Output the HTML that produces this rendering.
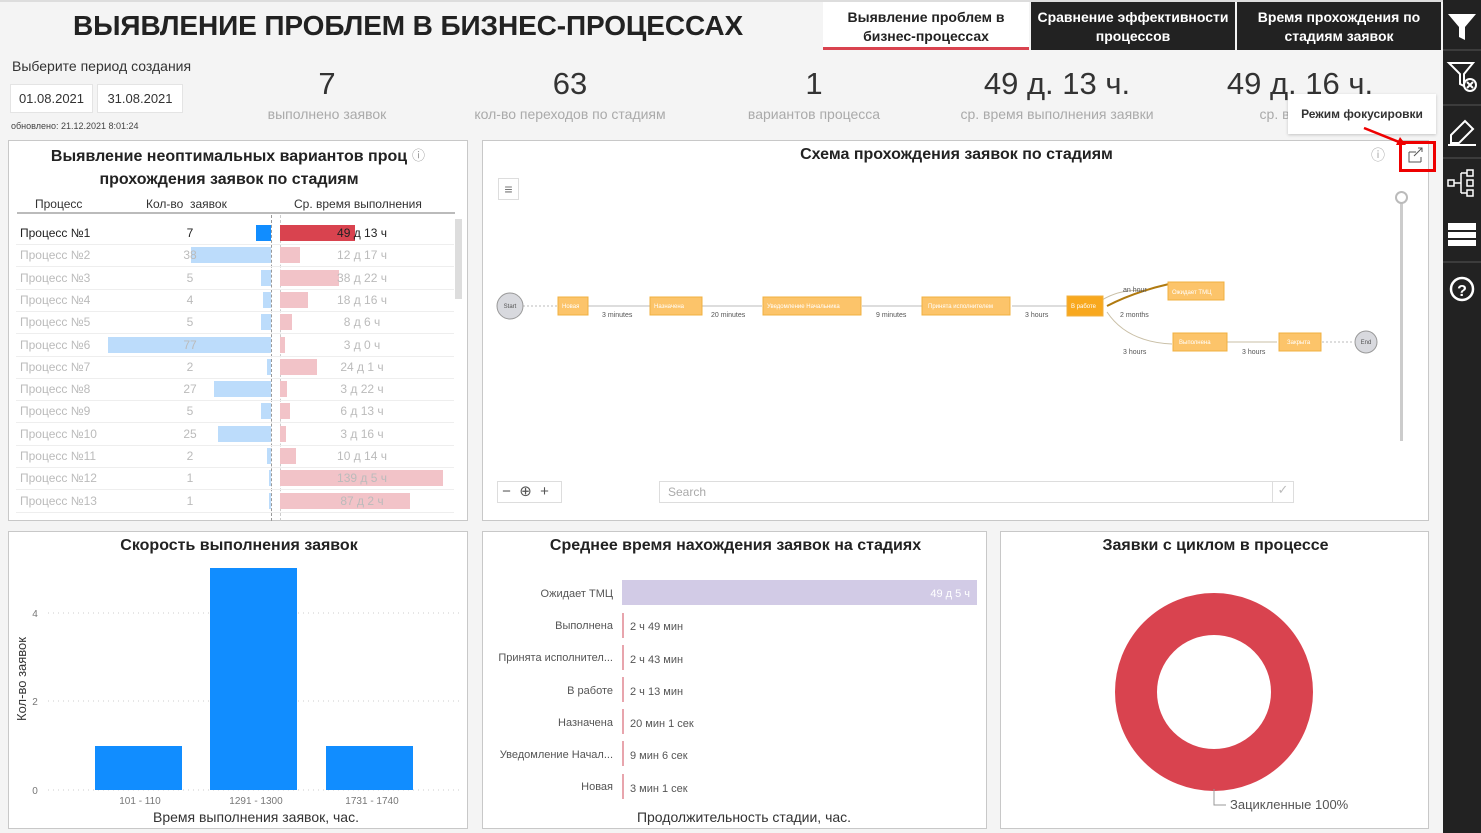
<!DOCTYPE html>
<html><head><meta charset="utf-8">
<style>
*{box-sizing:border-box;margin:0;padding:0}
body{width:1481px;height:833px;background:#f4f4f4;font-family:"Liberation Sans","DejaVu Sans",sans-serif;position:relative;overflow:hidden;color:#222}
.a{position:absolute}
.panel{position:absolute;background:#fff;border:1px solid #c8c8c8}
.kn{position:absolute;text-align:center;font-size:31px;color:#333;font-family:"Liberation Sans Narrow","Liberation Sans",sans-serif}
.kl{position:absolute;text-align:center;font-size:14px;color:#aaa}
.tab{position:absolute;top:2px;height:48px;background:#222;color:#fff;font-weight:bold;font-size:14px;text-align:center;line-height:19px;padding-top:6px}
.ttl{position:absolute;font-weight:bold;font-size:16px;color:#222;text-align:center}
</style></head><body>
<div class="a" style="left:0;top:0;width:1443px;height:2px;background:#ddd"></div>
<div class="a" style="left:73px;top:10px;font-size:28px;font-weight:bold;color:#222;letter-spacing:-0.1px">ВЫЯВЛЕНИЕ ПРОБЛЕМ В БИЗНЕС-ПРОЦЕССАХ</div>
<div class="tab" style="left:823px;width:206px;background:#fff;color:#222;border-bottom:3px solid #d9434f">Выявление проблем в<br>бизнес-процессах</div>
<div class="tab" style="left:1031px;width:204px">Сравнение эффективности<br>процессов</div>
<div class="tab" style="left:1237px;width:204px">Время прохождения по<br>стадиям заявок</div>
<div class="a" style="left:1443px;top:0;width:38px;height:833px;background:#222"></div>
<svg class="a" style="left:1443px;top:0" width="38" height="320">
<g fill="#fff" stroke="#fff">
<path d="M5 14h28l-11 13v13l-6-3v-10z" stroke="none"/>
<path d="M6 63h24l-9 11v12l-4-2v-10z" fill="none" stroke-width="2"/>
<circle cx="27" cy="85" r="6" fill="#222" stroke-width="2"/><path d="M24 82l6 6M30 82l-6 6" stroke-width="2"/>
<path d="M8 135l14-14 8 8-14 14h-8z" fill="none" stroke-width="2"/><path d="M5 145h28" stroke-width="2"/>
<rect x="5" y="180" width="6" height="6" fill="none" stroke-width="1.5"/><rect x="24" y="170" width="6" height="6" fill="none" stroke-width="1.5"/><rect x="24" y="180" width="6" height="6" fill="none" stroke-width="1.5"/><rect x="24" y="190" width="6" height="6" fill="none" stroke-width="1.5"/>
<path d="M11 183h7M18 173v20M18 173h6M18 193h6" fill="none" stroke-width="1.5"/>
<rect x="5" y="223" width="28" height="7" stroke="none"/><rect x="5" y="232" width="28" height="6" stroke="none"/><rect x="5" y="240" width="28" height="6" stroke="none"/>
<circle cx="19" cy="289" r="11" fill="none" stroke-width="2.5"/>
</g>
<path d="M0 50h38M0 105h38M0 158h38M0 262h38" stroke="#555"/>
<text x="19" y="296" fill="#fff" font-size="16" font-weight="bold" text-anchor="middle" font-family="Liberation Sans">?</text>
</svg>

<div class="a" style="left:12px;top:58px;font-size:14px;color:#333">Выберите период создания</div>
<div class="a" style="left:10px;top:84px;width:83px;height:29px;background:#fff;border:1px solid #e4e4e4;font-size:13px;text-align:center;line-height:28px;color:#333">01.08.2021</div>
<div class="a" style="left:97px;top:84px;width:86px;height:29px;background:#fff;border:1px solid #e4e4e4;font-size:13px;text-align:center;line-height:28px;color:#333">31.08.2021</div>
<div class="a" style="left:11px;top:121px;font-size:9px;color:#444">обновлено: 21.12.2021 8:01:24</div>

<div class="kn" style="left:227px;top:66px;width:200px">7</div><div class="kl" style="left:227px;top:106px;width:200px">выполнено заявок</div>
<div class="kn" style="left:470px;top:66px;width:200px">63</div><div class="kl" style="left:440px;top:106px;width:260px">кол-во переходов по стадиям</div>
<div class="kn" style="left:714px;top:66px;width:200px">1</div><div class="kl" style="left:714px;top:106px;width:200px">вариантов процесса</div>
<div class="kn" style="left:957px;top:66px;width:200px">49 д. 13 ч.</div><div class="kl" style="left:937px;top:106px;width:240px">ср. время выполнения заявки</div>
<div class="kn" style="left:1200px;top:66px;width:200px">49 д. 16 ч.</div><div class="kl" style="left:1180px;top:106px;width:240px">ср. время за</div>

<div class="panel" style="left:8px;top:140px;width:460px;height:381px">
<div class="ttl" style="left:0;top:4px;width:440px;line-height:23px">Выявление неоптимальных вариантов проц<br>прохождения заявок по стадиям</div>
<div class="a" style="left:403px;top:4px;font-size:13px;color:#999">ⓘ</div>
<div class="a" style="left:26px;top:56px;font-size:12px;color:#333">Процесс</div>
<div class="a" style="left:137px;top:56px;font-size:12px;color:#333">Кол-во &nbsp;заявок</div>
<div class="a" style="left:285px;top:56px;font-size:12px;color:#333">Ср. время выполнения</div>
<div class="a" style="left:8px;top:71px;width:438px;height:2px;background:#bbb"></div>
<div class="a" style="left:446px;top:78px;width:7px;height:80px;background:#ddd"></div>
<div class="a" style="left:262px;top:74px;width:1px;height:306px;border-left:1px dashed #999"></div>
<div class="a" style="left:271px;top:74px;width:1px;height:306px;border-left:1px dashed #ccc"></div>
</div>
<div id="tbl"></div>

<div class="panel" style="left:482px;top:140px;width:947px;height:381px">
<div class="ttl" style="left:0;top:5px;width:947px">Схема прохождения заявок по стадиям</div>
<div class="a" style="left:888px;top:4px;font-size:14px;color:#aaa">ⓘ</div>
<div class="a" style="left:916px;top:0px;width:37px;height:31px;border:3px solid #e00"></div>
<div class="a" style="left:15px;top:37px;width:21px;height:22px;border:1px solid #ddd;font-size:14px;text-align:center;line-height:20px;color:#777">≡</div>
<div class="a" style="left:917px;top:55px;width:3px;height:245px;background:#ccc"></div>
<div class="a" style="left:912px;top:50px;width:13px;height:13px;border:2px solid #bbb;border-radius:50%;background:#fff"></div>
<div class="a" style="left:14px;top:340px;width:65px;height:22px;border:1px solid #ddd;font-size:15px;color:#555;line-height:20px">&nbsp;− &nbsp;⊕ &nbsp;+</div>
<div class="a" style="left:176px;top:340px;width:635px;height:22px;border:1px solid #ddd;font-size:12px;color:#aaa;line-height:20px;padding-left:8px">Search</div>
<div class="a" style="left:789px;top:341px;width:21px;height:20px;border-left:1px solid #ddd;color:#bbb;text-align:center;font-size:13px">✓</div>
</div>
<svg class="a" style="left:482px;top:270px" width="920" height="90" font-family="Liberation Sans" font-size="7" fill="#555">
<g stroke="#bbb" fill="none"><path d="M41 36h35" stroke-dasharray="2 2"/><path d="M106 36h62M220 36h60M380 36h60M530 36h55"/><path d="M620 30q20-12 45-9" stroke="#c9bfa6"/><path d="M625 42q20 30 65 32M745 72h50" stroke="#c9bfa6"/><path d="M840 72h30" stroke-dasharray="2 2"/></g>
<path d="M687 14q-35 8-62 22" stroke="#b07a10" stroke-width="2" fill="none"/>
<circle cx="28" cy="36" r="13" fill="#d8d9de" stroke="#999"/><text x="28" y="38" text-anchor="middle" font-size="6">Start</text>
<circle cx="884" cy="72" r="11" fill="#d8d9de" stroke="#999"/><text x="884" y="74" text-anchor="middle" font-size="6">End</text>
<g fill="#fcc46a" stroke="#f0b040"><rect x="76" y="27" width="30" height="18"/><rect x="168" y="27" width="52" height="18"/><rect x="281" y="27" width="98" height="18"/><rect x="440" y="27" width="88" height="18"/><rect x="585" y="26" width="36" height="20" fill="#f8a81e"/><rect x="686" y="12" width="56" height="18"/><rect x="691" y="63" width="54" height="18"/><rect x="797" y="63" width="42" height="18"/></g>
<g fill="#fff" font-size="6"><text x="80" y="38">Новая</text><text x="172" y="38">Назначена</text><text x="285" y="38">Уведомление Начальника</text><text x="446" y="38">Принята исполнителем</text><text x="589" y="38">В работе</text><text x="690" y="24">Ожидает ТМЦ</text><text x="697" y="74">Выполнена</text><text x="805" y="74">Закрыта</text></g>
<text x="120" y="47">3 minutes</text><text x="229" y="47">20 minutes</text><text x="394" y="47">9 minutes</text><text x="543" y="47">3 hours</text><text x="641" y="22">an hour</text><text x="638" y="47">2 months</text><text x="641" y="84">3 hours</text><text x="760" y="84">3 hours</text>
</svg>
<div class="a" style="left:1288px;top:94px;width:148px;height:40px;background:#fff;font-size:12px;font-weight:bold;color:#333;line-height:40px;text-align:center;box-shadow:0 1px 3px rgba(0,0,0,.2)">Режим фокусировки</div>
<svg class="a" style="left:1360px;top:124px" width="60" height="30"><path d="M4 4l40 16" stroke="#e00" stroke-width="2.5"/><path d="M46 21l-10 0 4-8z" fill="#e00"/></svg>
<svg class="a" style="left:1407px;top:146px" width="18" height="18"><path d="M2 6v10h12M2 6h7M14 11v5M7 10l8-8M11 2h4v4" fill="none" stroke="#555"/></svg>

<div class="panel" style="left:8px;top:531px;width:460px;height:298px">
<div class="ttl" style="left:0;top:5px;width:460px">Скорость выполнения заявок</div>
</div>
<svg class="a" style="left:8px;top:531px" width="460" height="298" font-family="Liberation Sans">
<g stroke="#ccc" stroke-dasharray="1 4"><path d="M40 82h415M40 170h415M40 259h415"/></g>
<g fill="#118dff"><rect x="87" y="215" width="87" height="44"/><rect x="202" y="37" width="87" height="222"/><rect x="318" y="215" width="87" height="44"/></g>
<g font-size="10" fill="#777" text-anchor="middle"><text x="27" y="86">4</text><text x="27" y="174">2</text><text x="27" y="263">0</text><text x="132" y="273">101 - 110</text><text x="248" y="273">1291 - 1300</text><text x="364" y="273">1731 - 1740</text></g>
<text x="248" y="291" text-anchor="middle" font-size="14" fill="#333">Время выполнения заявок, час.</text>
<text transform="translate(18,148) rotate(-90)" text-anchor="middle" font-size="13" fill="#333">Кол-во заявок</text>
</svg>

<div class="panel" style="left:482px;top:531px;width:505px;height:298px">
<div class="ttl" style="left:0;top:5px;width:505px">Среднее время нахождения заявок на стадиях</div>
</div>
<svg class="a" style="left:482px;top:531px" width="505" height="298" font-family="Liberation Sans" font-size="11">
<rect x="140" y="49" width="355" height="25" fill="#d2cbe6"/>
<text x="488" y="66" fill="#fff" text-anchor="end">49 д 5 ч</text>
<g fill="#e8a5ad"><rect x="140" y="82" width="2" height="25"/><rect x="140" y="114" width="2" height="25"/><rect x="140" y="146" width="2" height="25"/><rect x="140" y="178" width="2" height="25"/><rect x="140" y="210" width="2" height="25"/><rect x="140" y="243" width="2" height="25"/></g>
<g fill="#555" text-anchor="end"><text x="131" y="66">Ожидает ТМЦ</text><text x="131" y="98">Выполнена</text><text x="131" y="130">Принята исполнител...</text><text x="131" y="163">В работе</text><text x="131" y="195">Назначена</text><text x="131" y="227">Уведомление Начал...</text><text x="131" y="259">Новая</text></g>
<g fill="#555"><text x="148" y="99">2 ч 49 мин</text><text x="148" y="132">2 ч 43 мин</text><text x="148" y="164">2 ч 13 мин</text><text x="148" y="196">20 мин 1 сек</text><text x="148" y="228">9 мин 6 сек</text><text x="148" y="261">3 мин 1 сек</text></g>
<text x="262" y="291" text-anchor="middle" font-size="14" fill="#333">Продолжительность стадии, час.</text>
</svg>

<div class="panel" style="left:1000px;top:531px;width:429px;height:298px">
<div class="ttl" style="left:0;top:5px;width:429px">Заявки с циклом в процессе</div>
</div>
<svg class="a" style="left:1000px;top:531px" width="429" height="298" font-family="Liberation Sans">
<circle cx="214" cy="161" r="78" fill="none" stroke="#d9434f" stroke-width="42"/>
<path d="M214 258v16h12" stroke="#999" fill="none"/>
<text x="230" y="278" font-size="13" fill="#555">Зацикленные 100%</text>
</svg>

<script>
var d=[["Процесс №1",7,15,"49 д 13 ч",75],["Процесс №2",38,80,"12 д 17 ч",20],["Процесс №3",5,10,"38 д 22 ч",59],["Процесс №4",4,8,"18 д 16 ч",28],["Процесс №5",5,10,"8 д 6 ч",12],["Процесс №6",77,163,"3 д 0 ч",5],["Процесс №7",2,4,"24 д 1 ч",37],["Процесс №8",27,57,"3 д 22 ч",7],["Процесс №9",5,10,"6 д 13 ч",10],["Процесс №10",25,53,"3 д 16 ч",6],["Процесс №11",2,4,"10 д 14 ч",16],["Процесс №12",1,2,"139 д 5 ч",163],["Процесс №13",1,2,"87 д 2 ч",130]];
var h="";
d.forEach(function(r,i){var y=222+i*22.3;var f=i==0;
h+='<div class="a" style="left:'+(271-r[2])+'px;top:'+(y+3)+'px;width:'+r[2]+'px;height:16px;background:'+(f?'#118dff':'#bcdcfb')+'"></div>';
h+='<div class="a" style="left:280px;top:'+(y+3)+'px;width:'+r[4]+'px;height:16px;background:'+(f?'#d9434f':'#f2c3c8')+'"></div>';
h+='<div class="a" style="left:16px;top:'+(y+22)+'px;width:438px;height:1px;background:#eee"></div>';
var c=f?'#222':'#bbb';
h+='<div class="a" style="left:20px;top:'+(y+4)+'px;font-size:12px;color:'+c+'">'+r[0]+'</div>';
h+='<div class="a" style="left:160px;top:'+(y+4)+'px;width:60px;text-align:center;font-size:12px;color:'+c+'">'+r[1]+'</div>';
h+='<div class="a" style="left:322px;top:'+(y+4)+'px;width:80px;text-align:center;font-size:12px;color:'+c+'">'+r[3]+'</div>';});
document.getElementById('tbl').innerHTML=h;
</script>
</body></html>
